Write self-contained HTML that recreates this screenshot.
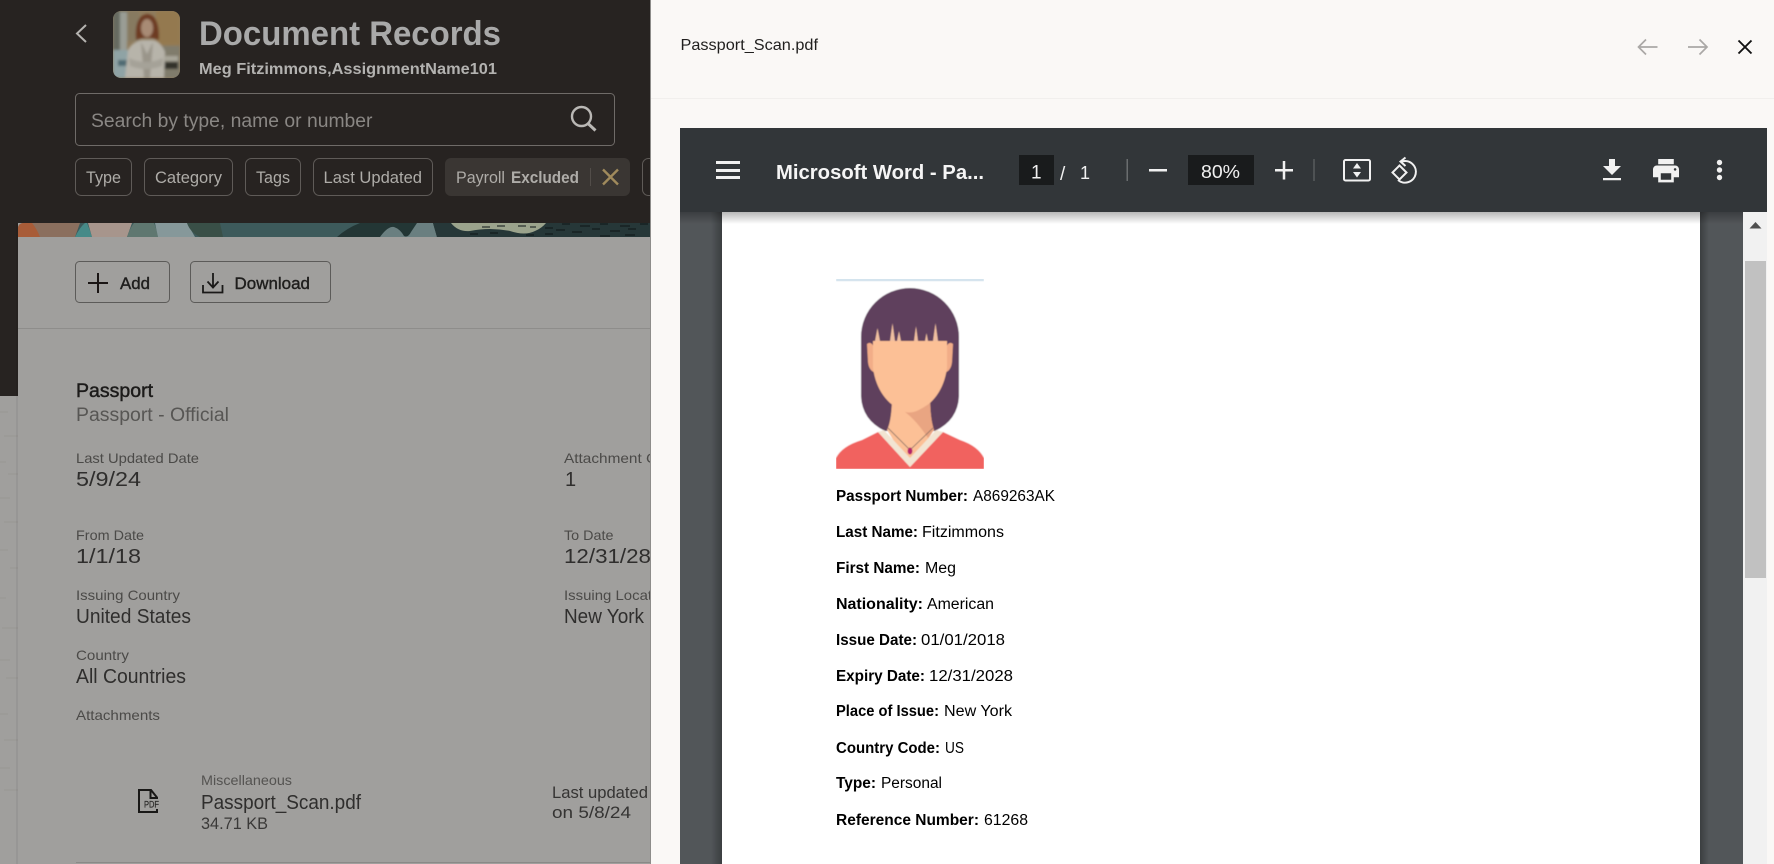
<!DOCTYPE html>
<html lang="en">
<head>
<meta charset="utf-8">
<title>Document Records</title>
<style>
html,body{margin:0;padding:0;width:1774px;height:864px;overflow:hidden;background:#a09f9d}
svg{display:block}
text{font-family:"Liberation Sans",sans-serif}
.b{font-weight:bold}
.chip{font-size:16.5px;fill:#aeaca8}
.lab{font-size:14px;fill:#4b4a48}
.val{font-size:20px;fill:#2f2e2d}
.pdf{font-size:15.5px;fill:#000}
</style>
</head>
<body>
<svg width="1774" height="864" viewBox="0 0 1774 864" xmlns="http://www.w3.org/2000/svg">
<defs>
<filter id="bl" x="-20%" y="-20%" width="140%" height="140%"><feGaussianBlur stdDeviation="1.3"/></filter>
<filter id="bs" x="-5%" y="-5%" width="110%" height="110%"><feGaussianBlur stdDeviation="0.5"/></filter>
<clipPath id="av"><rect x="113" y="11" width="67" height="67" rx="8"/></clipPath>
<clipPath id="ban"><path d="M18 237V229q0-6 6-6H650V237Z"/></clipPath>
<clipPath id="ph"><rect x="836" y="279" width="148" height="190"/></clipPath>
<linearGradient id="tb" x1="0" y1="0" x2="0" y2="1"><stop offset="0" stop-color="#000" stop-opacity=".28"/><stop offset="1" stop-color="#000" stop-opacity="0"/></linearGradient>
<linearGradient id="sl" x1="1" y1="0" x2="0" y2="0"><stop offset="0" stop-color="#000" stop-opacity=".28"/><stop offset="1" stop-color="#000" stop-opacity="0"/></linearGradient>
<linearGradient id="sr" x1="0" y1="0" x2="1" y2="0"><stop offset="0" stop-color="#000" stop-opacity=".28"/><stop offset="1" stop-color="#000" stop-opacity="0"/></linearGradient>
</defs>

<!-- left dimmed page -->
<rect width="650" height="864" fill="#a09f9d"/>
<rect width="650" height="396" fill="#272321"/>
<g stroke="#94938f" stroke-width="1" opacity=".6">
<path d="M0 412H8M4 436H18M0 462H6M8 474H18M0 498H10M4 522H18M0 550H8M10 568H18M0 598H6M2 628H18M0 660H10M6 678H18M0 714H8M4 740H18M0 768H10M4 790H18"/>
</g>

<!-- header -->
<path d="M86 25L77 33.5L86 42" fill="none" stroke="#b5b3b0" stroke-width="2"/>
<g clip-path="url(#av)">
<rect x="113" y="11" width="67" height="67" fill="#8f7c5e"/>
<g filter="url(#bl)">
<rect x="113" y="11" width="14" height="42" fill="#666a60"/>
<rect x="120" y="12" width="7" height="38" fill="#9a9d95"/>
<rect x="127" y="11" width="12" height="30" fill="#877a60"/>
<rect x="156" y="11" width="24" height="34" fill="#94794f"/>
<rect x="113" y="50" width="16" height="28" fill="#8fa3a5"/>
<rect x="118" y="60" width="10" height="6" fill="#4f6a72"/>
<rect x="162" y="46" width="18" height="32" fill="#807b6c"/>
<rect x="165" y="56" width="13" height="5" fill="#a8a69a"/>
<rect x="163" y="62" width="15" height="7" fill="#33312c"/>
<path d="M136 40Q134 16 147 14Q160 15 159 40L152 38H142Z" fill="#6d3b24"/>
<ellipse cx="147" cy="28" rx="6" ry="9" fill="#a88b74"/>
<path d="M125 78L128 50Q132 42 142 40H153Q161 42 165 52L164 78Z" fill="#b7b4aa"/>
<path d="M141 42L147 54L153 42L150 78H144Z" fill="#9a958a"/>
<path d="M129 58Q146 66 163 58L162 66Q146 72 130 66Z" fill="#a5a298"/>
</g>
</g>
<text x="199" y="45" class="b" font-size="34" fill="#a9a9a9" textLength="302" lengthAdjust="spacingAndGlyphs">Document Records</text>
<text x="199" y="74" class="b" font-size="15.5" fill="#b3b2b0" textLength="298" lengthAdjust="spacingAndGlyphs">Meg Fitzimmons,AssignmentName101</text>

<rect x="75.5" y="93.5" width="539" height="52" rx="4" fill="none" stroke="#6f6b68"/>
<text x="91" y="127" font-size="19" fill="#8a8784" textLength="281.5" lengthAdjust="spacingAndGlyphs">Search by type, name or number</text>
<circle cx="581.5" cy="116.5" r="9.5" fill="none" stroke="#bab8b5" stroke-width="2.4"/>
<path d="M588 123.500L595.500 130.500" stroke="#bab8b5" stroke-width="3" fill="none"/>

<g fill="none" stroke="#5f5b58">
<rect x="75.5" y="158.5" width="56" height="37" rx="6"/>
<rect x="144.5" y="158.5" width="88" height="37" rx="6"/>
<rect x="245.5" y="158.5" width="55" height="37" rx="6"/>
<rect x="313.5" y="158.5" width="119" height="37" rx="6"/>
<rect x="642.5" y="158.5" width="40" height="37" rx="6"/>
</g>
<rect x="445" y="158" width="185" height="38" rx="6" fill="#3a3633"/>
<text x="86" y="183" class="chip" textLength="35" lengthAdjust="spacingAndGlyphs">Type</text>
<text x="155" y="183" class="chip" textLength="67" lengthAdjust="spacingAndGlyphs">Category</text>
<text x="256" y="183" class="chip" textLength="34" lengthAdjust="spacingAndGlyphs">Tags</text>
<text x="323.5" y="183" class="chip" textLength="98.5" lengthAdjust="spacingAndGlyphs">Last Updated</text>
<text x="456" y="183" class="chip" textLength="49" lengthAdjust="spacingAndGlyphs">Payroll</text>
<text x="511" y="183" class="chip b" textLength="68" lengthAdjust="spacingAndGlyphs">Excluded</text>
<path d="M590.5 168V186" stroke="#524d49"/>
<path d="M603 169.500L618 184.500M618 169.500L603 184.500" stroke="#a08a5c" stroke-width="2.400" fill="none"/>

<!-- card -->
<rect x="16" y="223" width="2" height="641" fill="#000" opacity=".05"/>
<rect x="18" y="223" width="632" height="641" fill="#a09f9d"/>
<g clip-path="url(#ban)">
<rect x="18" y="223" width="632" height="14" fill="#3d5a5b"/>
<path d="M18 223H80L75 237H18Z" fill="#8b6f5e"/>
<path d="M18 237V223H32Q37 229 40 237Z" fill="#a85c38"/>
<path d="M75 237Q80 227 85 223H87Q90 230 92 237Z" fill="#468a88"/>
<path d="M88 223H132L127 237H92Z" fill="#a7958c"/>
<path d="M127 237Q130 228 134 223H154Q157 230 158 237Z" fill="#5f7770"/>
<path d="M155 223H187L195 237H158Z" fill="#86989a"/>
<path d="M187 223H220L223 237H200Q190 232 187 223Z" fill="#394f47"/>
<path d="M337 237Q347 228 360 223H650V237Z" fill="#233635"/>
<path d="M380 237Q388 226 394 227Q400 229 404 236Q408 238 411 232L417 223H433L437 237Z" fill="#6a7f80"/>
<path d="M433 223H650V237H437Z" fill="#263738"/>
<path d="M451 223Q458 232 470 231Q490 227 510 231Q525 236 535 231Q542 228 546 223Z" fill="#9ba38c"/>
<g stroke="#0e1516" stroke-width="1" fill="none">
<path d="M482 227H490M497 226H505M518 226H526M530 227H536M545 228H553M562 224H570M580 226H590M600 224H608M620 226H630M640 224H648M556 230H565M572 232H582M592 229H600M610 231H620M628 229H636M470 234H478M490 233H498M526 235H534M545 234H553M600 236H610M625 235H635"/>
</g>
</g>

<rect x="75.500" y="261.500" width="94" height="41" rx="4" fill="none" stroke="#5c5b59"/>
<path d="M98 273V293M88 283H108" stroke="#1a1514" stroke-width="2" fill="none"/>
<text x="120" y="289" font-size="17" fill="#1f1e1d" stroke="#1f1e1d" stroke-width=".4" textLength="30" lengthAdjust="spacingAndGlyphs">Add</text>
<rect x="190.500" y="261.500" width="140" height="41" rx="4" fill="none" stroke="#5c5b59"/>
<path d="M213 273V287M207.500 281.500L213 287.500L218.500 281.500M203 285V292.500H222.500V285" stroke="#1a1918" stroke-width="1.800" fill="none"/>
<text x="234.500" y="289" font-size="17" fill="#1f1e1d" stroke="#1f1e1d" stroke-width=".4" textLength="75.500" lengthAdjust="spacingAndGlyphs">Download</text>
<path d="M18 328.500H650" stroke="#8e8d8b"/>

<text x="76" y="397" font-size="19" fill="#1c1b1a" stroke="#1c1b1a" stroke-width=".45" textLength="77" lengthAdjust="spacingAndGlyphs">Passport</text>
<text x="76" y="421" font-size="19" fill="#575654" textLength="153" lengthAdjust="spacingAndGlyphs">Passport - Official</text>

<text x="76" y="463" class="lab" textLength="123" lengthAdjust="spacingAndGlyphs">Last Updated Date</text>
<text x="76" y="486" class="val" textLength="65" lengthAdjust="spacingAndGlyphs">5/9/24</text>
<text x="564" y="463" class="lab" textLength="123" lengthAdjust="spacingAndGlyphs">Attachment Count</text>
<text x="565" y="486" class="val">1</text>

<text x="76" y="540" class="lab" textLength="68" lengthAdjust="spacingAndGlyphs">From Date</text>
<text x="76" y="563" class="val" textLength="65" lengthAdjust="spacingAndGlyphs">1/1/18</text>
<text x="564" y="540" class="lab" textLength="49.500" lengthAdjust="spacingAndGlyphs">To Date</text>
<text x="564" y="563" class="val" textLength="87" lengthAdjust="spacingAndGlyphs">12/31/28</text>

<text x="76" y="600" class="lab" textLength="104" lengthAdjust="spacingAndGlyphs">Issuing Country</text>
<text x="76" y="623" class="val" textLength="115" lengthAdjust="spacingAndGlyphs">United States</text>
<text x="564" y="600" class="lab" textLength="108" lengthAdjust="spacingAndGlyphs">Issuing Location</text>
<text x="564" y="623" class="val" textLength="80" lengthAdjust="spacingAndGlyphs">New York</text>

<text x="76" y="660" class="lab" textLength="53" lengthAdjust="spacingAndGlyphs">Country</text>
<text x="76" y="683" class="val" textLength="110" lengthAdjust="spacingAndGlyphs">All Countries</text>
<text x="76" y="720" class="lab" textLength="84" lengthAdjust="spacingAndGlyphs">Attachments</text>

<path d="M157 797.500L151 790H139V812H157V809M157 797V799" fill="none" stroke="#191817" stroke-width="2"/>
<path d="M150.500 790V798H157" fill="none" stroke="#191817" stroke-width="2"/>
<text x="144" y="807.500" font-size="9.500" fill="#2a2928" stroke="#2a2928" stroke-width=".2" textLength="15" lengthAdjust="spacingAndGlyphs">PDF</text>
<text x="201" y="785" font-size="14" fill="#545351" textLength="91" lengthAdjust="spacingAndGlyphs">Miscellaneous</text>
<text x="201" y="809" font-size="20" fill="#2f2e2d" textLength="160" lengthAdjust="spacingAndGlyphs">Passport_Scan.pdf</text>
<text x="201" y="829" font-size="17" fill="#3a3938" textLength="67" lengthAdjust="spacingAndGlyphs">34.71 KB</text>
<text x="552" y="798" font-size="17" fill="#353433" textLength="96" lengthAdjust="spacingAndGlyphs">Last updated</text>
<text x="552" y="818" font-size="17" fill="#353433" textLength="79" lengthAdjust="spacingAndGlyphs">on 5/8/24</text>
<path d="M76 862.500H650" stroke="#8a8987"/>

<!-- right panel -->
<rect x="650" y="0" width="1124" height="864" fill="#faf8f6"/>
<rect x="650" y="0" width="1" height="864" fill="#8d8c8a"/>
<rect x="651" y="98" width="1123" height="1" fill="#f1efed"/>
<text x="680.500" y="50" font-size="16" fill="#201f1e" textLength="137.500" lengthAdjust="spacingAndGlyphs">Passport_Scan.pdf</text>
<path d="M1657.500 47H1638.500M1646 39.500L1638.500 47L1646 54.500" fill="none" stroke="#aaa8a6" stroke-width="1.700"/>
<path d="M1688 47H1707M1699.500 39.500L1707 47L1699.500 54.500" fill="none" stroke="#aaa8a6" stroke-width="1.700"/>
<path d="M1738.500 40.500L1751.500 53.500M1751.500 40.500L1738.500 53.500" fill="none" stroke="#111" stroke-width="1.900"/>

<!-- pdf viewer -->
<rect x="680" y="128" width="1087" height="736" fill="#525659"/>
<rect x="722" y="212" width="978" height="652" fill="#fff"/>
<rect x="711" y="212" width="11" height="652" fill="url(#sl)"/>
<rect x="1700" y="212" width="9" height="652" fill="url(#sr)"/>
<rect x="1743" y="212" width="24" height="652" fill="#f1f1f1"/>
<rect x="1745" y="261" width="21" height="317" fill="#c1c1c1"/>
<path d="M1749.500 228.500L1755.500 222L1761.500 228.500Z" fill="#505050"/>
<rect x="680" y="212" width="1063" height="12" fill="url(#tb)"/>
<rect x="680" y="128" width="1087" height="84" fill="#323639"/>

<path d="M716 161h24v3h-24zM716 169h24v3h-24zM716 176h24v3h-24z" fill="#f1f1f1"/>
<text x="776" y="179" class="b" font-size="20" fill="#f5f5f5" textLength="208" lengthAdjust="spacingAndGlyphs">Microsoft Word - Pa...</text>
<rect x="1019" y="155" width="35" height="30" fill="#191b1c"/>
<text x="1031" y="178.500" font-size="19" fill="#f1f1f1">1</text>
<text x="1060" y="180" font-size="19" fill="#f1f1f1">/</text>
<text x="1080" y="179" font-size="18" fill="#f1f1f1">1</text>
<rect x="1126.500" y="159" width="1.500" height="22" fill="#6a6d6f"/>
<rect x="1149" y="169" width="18" height="2.500" fill="#f1f1f1"/>
<rect x="1188" y="155" width="66" height="30" fill="#191b1c"/>
<text x="1201" y="178" font-size="18.500" fill="#f1f1f1" textLength="39" lengthAdjust="spacingAndGlyphs">80%</text>
<path d="M1275 170.300H1293M1284 161V179.500" stroke="#f1f1f1" stroke-width="2.500" fill="none"/>
<rect x="1313.500" y="159" width="1" height="22" fill="#6a6d6f"/>

<rect x="1344" y="160" width="26" height="20.500" rx="1.500" fill="none" stroke="#f1f1f1" stroke-width="2"/>
<path d="M1357 163L1361 168.500H1353ZM1357 177.500L1361 172H1353Z" fill="#f1f1f1"/>

<path d="M1405.500 157.500L1400.500 161.500L1405.500 166" fill="none" stroke="#f1f1f1" stroke-width="2"/>
<path d="M1402 161.500A10.800 10.800 0 1 1 1398 180" fill="none" stroke="#f1f1f1" stroke-width="2"/>
<path d="M1399.500 165.500L1392.500 172.500L1399.500 179.500L1406.500 172.500Z" fill="none" stroke="#f1f1f1" stroke-width="2"/>

<path d="M1609 159h6v7h6l-9 9-9-9h6zM1603 178h18v2.200h-18z" fill="#f1f1f1"/>
<path transform="translate(1650.400 155.100) scale(1.300)" d="M19 8H5c-1.660 0-3 1.340-3 3v6h4v4h12v-4h4v-6c0-1.660-1.340-3-3-3zm-3 11H8v-5h8v5zm3-7c-.55 0-1-.45-1-1s.45-1 1-1 1 .45 1 1-.45 1-1 1zm-1-9H6v4h12V3z" fill="#f1f1f1"/>
<circle cx="1719.500" cy="162.500" r="2.700" fill="#f1f1f1"/>
<circle cx="1719.500" cy="170" r="2.700" fill="#f1f1f1"/>
<circle cx="1719.500" cy="177.500" r="2.700" fill="#f1f1f1"/>

<!-- passport photo -->
<g clip-path="url(#ph)" filter="url(#bs)">
<rect x="836" y="279" width="148" height="190" fill="#fff"/>
<rect x="836" y="279" width="148" height="2" fill="#c9dde9"/>
<path d="M861 337A49 49 0 0 1 959 337V396Q958 420 935 431H885Q862 420 861 396Z" fill="#5e405d"/>
<path d="M892 395H930Q930 420 934 430L910 467L887 430Q892 420 892 395Z" fill="#fcc096"/>
<path d="M905 412Q920 415 930 398Q930 418 934 430L928 438Q916 420 905 412Z" fill="#e9a582"/>
<path d="M867 344Q872 340 875 350L877 373Q869 372 868 362Z" fill="#f2ad88"/>
<path d="M953 344Q948 340 945 350L943 373Q951 372 952 362Z" fill="#f2ad88"/>
<path d="M873 341H947V368Q944 390 930 403Q918 412 910 412Q902 412 890 403Q876 390 873 368Z" fill="#fcc096"/>
<path d="M875 341L877.500 328L880 341ZM890 341L892.500 323L895 341ZM897 341L899 331L901 341ZM914 341L916 326L918 341ZM925 341L926.500 333L928 341ZM933 341L935.500 323L938 341Z" fill="#f0bfa0"/>
<path d="M836 469V458Q842 446 862 440L878 432L910 467L943 432L960 440Q978 446 984 458V469Z" fill="#f1625f"/>
<path d="M878 432L884 430L910 458L936 430L943 432L910 467Z" fill="#f2e4d2"/>
<path d="M888 428L910 450L933 428" fill="none" stroke="#77655f" stroke-width=".8"/>
<ellipse cx="910" cy="451" rx="2.400" ry="3.500" fill="#b3206c"/>
</g>

<!-- passport text -->
<text x="836" y="501" class="pdf b" textLength="132" lengthAdjust="spacingAndGlyphs">Passport Number:</text>
<text x="973" y="501" class="pdf" textLength="82" lengthAdjust="spacingAndGlyphs">A869263AK</text>
<text x="836" y="537" class="pdf b" textLength="82" lengthAdjust="spacingAndGlyphs">Last Name:</text>
<text x="922" y="537" class="pdf" textLength="82" lengthAdjust="spacingAndGlyphs">Fitzimmons</text>
<text x="836" y="573" class="pdf b" textLength="84" lengthAdjust="spacingAndGlyphs">First Name:</text>
<text x="925" y="573" class="pdf" textLength="31" lengthAdjust="spacingAndGlyphs">Meg</text>
<text x="836" y="609" class="pdf b" textLength="87" lengthAdjust="spacingAndGlyphs">Nationality:</text>
<text x="927" y="609" class="pdf" textLength="67" lengthAdjust="spacingAndGlyphs">American</text>
<text x="836" y="645" class="pdf b" textLength="81" lengthAdjust="spacingAndGlyphs">Issue Date:</text>
<text x="921" y="645" class="pdf" textLength="84" lengthAdjust="spacingAndGlyphs">01/01/2018</text>
<text x="836" y="681" class="pdf b" textLength="89" lengthAdjust="spacingAndGlyphs">Expiry Date:</text>
<text x="929" y="681" class="pdf" textLength="84" lengthAdjust="spacingAndGlyphs">12/31/2028</text>
<text x="836" y="716" class="pdf b" textLength="103" lengthAdjust="spacingAndGlyphs">Place of Issue:</text>
<text x="944" y="716" class="pdf" textLength="68" lengthAdjust="spacingAndGlyphs">New York</text>
<text x="836" y="753" class="pdf b" textLength="104" lengthAdjust="spacingAndGlyphs">Country Code:</text>
<text x="945" y="753" class="pdf" font-size="15.500" textLength="19" lengthAdjust="spacingAndGlyphs">US</text>
<text x="836" y="788" class="pdf b" textLength="40" lengthAdjust="spacingAndGlyphs">Type:</text>
<text x="881" y="788" class="pdf" textLength="61" lengthAdjust="spacingAndGlyphs">Personal</text>
<text x="836" y="825" class="pdf b" textLength="143" lengthAdjust="spacingAndGlyphs">Reference Number:</text>
<text x="984" y="825" class="pdf" textLength="44" lengthAdjust="spacingAndGlyphs">61268</text>
</svg>
</body>
</html>
